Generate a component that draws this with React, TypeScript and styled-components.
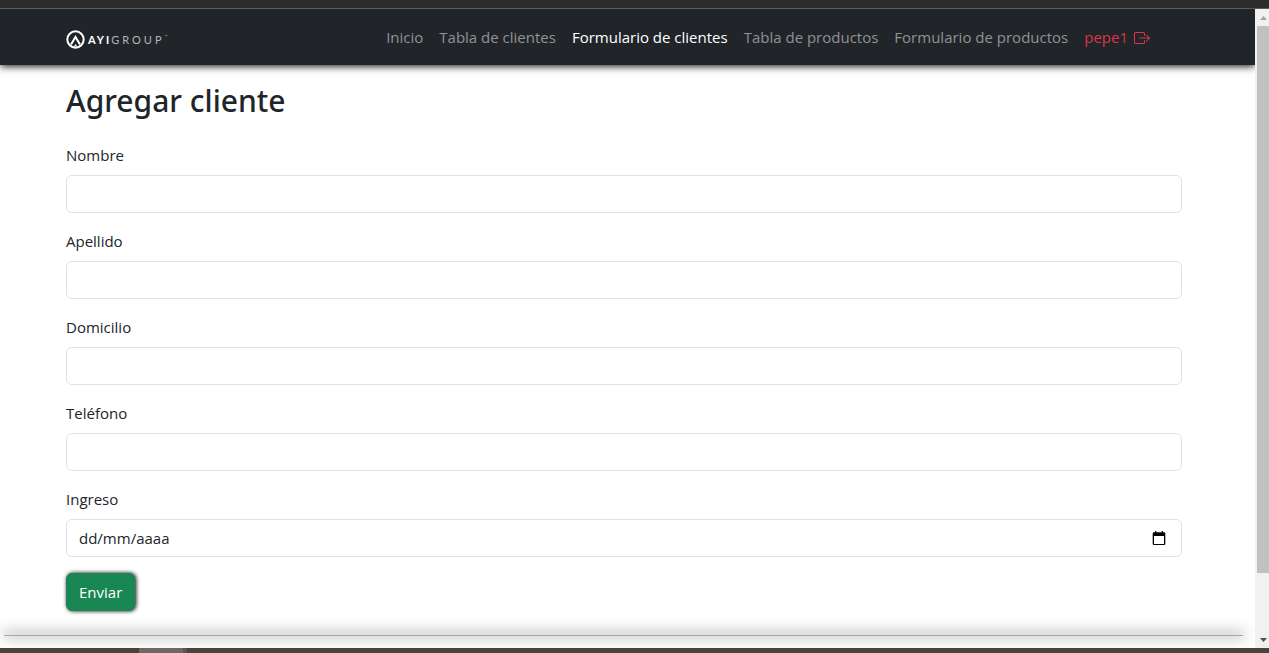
import React from "react";
import styled, { createGlobalStyle } from "styled-components";

const GlobalStyle = createGlobalStyle`
  *, *::before, *::after { box-sizing: border-box; }
  body {
    margin: 0;
    background: #fff;
    color: #212529;
    font-family: "Segoe UI", "Open Sans", "Noto Sans", sans-serif;
    font-size: 15px;
    line-height: 24px;
  }
`;

const Frame = styled.div`
  display: flex;
  flex-direction: column;
  min-height: 100vh;
`;

const TopStrip = styled.div`
  height: 9px;
  background: #2c2c2c;
  border-bottom: 1px solid #5b5b5b;
`;

const Viewport = styled.div`
  display: flex;
  flex: 1;
`;

const Page = styled.div`
  flex: 1;
  min-width: 0;
`;

const Navbar = styled.header`
  padding-right: 7px;
  background: #212529;
  box-shadow: 0 1px 8px #000;
  clip-path: inset(0 0 -16px 0);
`;

const Container = styled.div`
  width: 100%;
  max-width: 1140px;
  margin: 0 auto;
  padding: 0 12px;
`;

const NavRow = styled(Container)`
  display: flex;
  align-items: center;
  justify-content: space-between;
  height: 56px;
`;

const Brand = styled.a`
  display: flex;
  align-items: center;
  gap: 3px;
  padding-top: 5px;
  color: #fff;
  text-decoration: none;
`;

const BrandName = styled.span`
  display: flex;
  font-family: Lato, sans-serif;
  font-size: 11px;
  line-height: 18px;
  letter-spacing: 3px;
  color: #b4b6b8;

  b {
    color: #fff;
    font-weight: 700;
    letter-spacing: 2px;
  }

  small {
    font-size: 4px;
    line-height: 12px;
    letter-spacing: 0;
  }
`;

const NavList = styled.nav`
  display: flex;
  gap: 16px;
  padding-right: 32px;
`;

const NavLink = styled.a<{ $tone?: "active" | "danger" }>`
  display: flex;
  align-items: center;
  gap: 6px;
  color: ${({ $tone }) =>
    $tone === "active" ? "#fff" : $tone === "danger" ? "#dc3545" : "#909294"};
  text-decoration: none;
  white-space: nowrap;
`;

const Main = styled.main`
  padding: 16px 7px 0 0;
`;

const Title = styled.h1`
  margin: 0 0 22px;
  font-family: "Segoe UI", "Noto Sans", sans-serif;
  font-size: 30px;
  line-height: 40px;
  font-weight: 500;
`;

const Field = styled.div`
  display: flex;
  flex-direction: column;
  gap: 8px;
  margin-bottom: 16px;
`;

const InputShell = styled.div`
  display: flex;
  align-items: center;
  height: 38px;
  padding: 0 12px;
  border: 1px solid #dee2e6;
  border-radius: 6px;
  background: #fff;
`;

const Input = styled.input`
  flex: 1;
  min-width: 0;
  height: 36px;
  padding: 0;
  border: 0;
  outline: 0;
  background: transparent;
  color: #212529;
  font: inherit;

  &::placeholder {
    color: #212529;
    opacity: 1;
  }
`;

const PickerButton = styled.button`
  display: flex;
  padding: 0 3px;
  border: 0;
  background: none;
  color: #000;
`;

const SubmitButton = styled.button`
  display: block;
  height: 38px;
  padding: 0 12px;
  border: 1px solid #198754;
  border-radius: 6px;
  background: #198754;
  box-shadow: 1px 0 4px #000;
  color: #fff;
  font: inherit;
`;

const Divider = styled.hr`
  height: 1px;
  margin: 24px 5px 0 4px;
  border: 0;
  background: #a6a7a9;
  box-shadow: 0 -1px 14px 1px #555;
`;

const Scrollbar = styled.div`
  display: flex;
  flex-direction: column;
  width: 14px;
  padding-left: 2px;
  background: #f1f1f1;
`;

const ScrollArrow = styled.button`
  display: flex;
  align-items: center;
  justify-content: center;
  height: 17px;
  padding: 0;
  border: 0;
  background: none;
`;

const Thumb = styled.div`
  flex: 547;
  background: #c1c1c1;
`;

const Track = styled.div`
  flex: 58;
`;

const Taskbar = styled.div`
  display: flex;
  height: 5px;
  padding-left: 139px;
  background: #47453a;
`;

const TaskItem = styled.div`
  width: 48px;
  background: #6b6961;
  border-right: 4px solid #58564d;
`;

const LogoMark = () => (
  <svg width="19" height="19" viewBox="0 0 19 19" aria-hidden="true">
    <circle cx="9.500" cy="9.500" r="8.200" fill="none" stroke="#fff" strokeWidth="2" />
    <path d="M5 14.500 9.500 7l4.500 7.500" fill="none" stroke="#fff" strokeWidth="2" />
    <path d="m7.800 16.500 1.700-2.500 1.700 2.500z" fill="#fff" />
  </svg>
);

const LogoutIcon = () => (
  <svg width="16" height="16" viewBox="0 -1 16 16" fill="currentColor" aria-hidden="true">
    <path
      fillRule="evenodd"
      d="M10 12.500a.5.5 0 0 1-.5.5h-8a.5.5 0 0 1-.5-.5v-9a.5.5 0 0 1 .5-.5h8a.5.5 0 0 1 .5.5v2a.5.5 0 0 0 1 0v-2A1.500 1.500 0 0 0 9.500 2h-8A1.500 1.500 0 0 0 0 3.500v9A1.500 1.500 0 0 0 1.500 14h8a1.500 1.500 0 0 0 1.500-1.500v-2a.5.5 0 0 0-1 0z"
    />
    <path
      fillRule="evenodd"
      d="M15.854 8.354a.5.5 0 0 0 0-.708l-3-3a.5.5 0 0 0-.708.708L14.293 7.500H5.500a.5.5 0 0 0 0 1h8.793l-2.147 2.146a.5.5 0 0 0 .708.708z"
    />
  </svg>
);

const CalendarIcon = () => (
  <svg width="14" height="15" viewBox="0 0 14 15" aria-hidden="true">
    <path
      fill="currentColor"
      fillRule="evenodd"
      d="M3 0h1.300v1.300h5.400V0H11v1.300h1A1.300 1.300 0 0 1 13.300 2.600v10.200A1.300 1.300 0 0 1 12 14.100H2A1.300 1.300 0 0 1 .700 12.800V2.600A1.300 1.300 0 0 1 2 1.300h1zM2 5v7.900h10V5z"
    />
  </svg>
);

const links = [
  "Inicio",
  "Tabla de clientes",
  "Formulario de clientes",
  "Tabla de productos",
  "Formulario de productos",
];

const fields = ["Nombre", "Apellido", "Domicilio", "Teléfono"];

export default function App() {
  return (
    <>
      <GlobalStyle />
      <Frame>
        <TopStrip />
        <Viewport>
          <Page>
            <Navbar>
              <NavRow>
                <Brand href="#">
                  <LogoMark />
                  <BrandName>
                    <b>AYI</b>GROUP<small>™</small>
                  </BrandName>
                </Brand>
                <NavList>
                  {links.map((link) => (
                    <NavLink
                      key={link}
                      href="#"
                      $tone={link === "Formulario de clientes" ? "active" : undefined}
                    >
                      {link}
                    </NavLink>
                  ))}
                  <NavLink href="#" $tone="danger">
                    pepe1
                    <LogoutIcon />
                  </NavLink>
                </NavList>
              </NavRow>
            </Navbar>
            <Main>
              <Container>
                <Title>Agregar cliente</Title>
                <form onSubmit={(e) => e.preventDefault()}>
                  {fields.map((name) => (
                    <Field key={name}>
                      <label htmlFor={name}>{name}</label>
                      <InputShell>
                        <Input id={name} type="text" />
                      </InputShell>
                    </Field>
                  ))}
                  <Field>
                    <label htmlFor="Ingreso">Ingreso</label>
                    <InputShell>
                      <Input id="Ingreso" type="text" placeholder="dd/mm/aaaa" />
                      <PickerButton type="button" aria-label="Abrir calendario">
                        <CalendarIcon />
                      </PickerButton>
                    </InputShell>
                  </Field>
                  <SubmitButton type="submit">Enviar</SubmitButton>
                </form>
              </Container>
              <Divider />
            </Main>
          </Page>
          <Scrollbar>
            <ScrollArrow aria-label="Subir">
              <svg width="7" height="4" viewBox="0 0 7 4">
                <path d="M0 4 3.500 0 7 4z" fill="#a3a3a3" />
              </svg>
            </ScrollArrow>
            <Thumb />
            <Track />
            <ScrollArrow aria-label="Bajar">
              <svg width="7" height="4" viewBox="0 0 7 4">
                <path d="M0 0 3.500 4 7 0z" fill="#505050" />
              </svg>
            </ScrollArrow>
          </Scrollbar>
        </Viewport>
        <Taskbar>
          <TaskItem />
        </Taskbar>
      </Frame>
    </>
  );
}
